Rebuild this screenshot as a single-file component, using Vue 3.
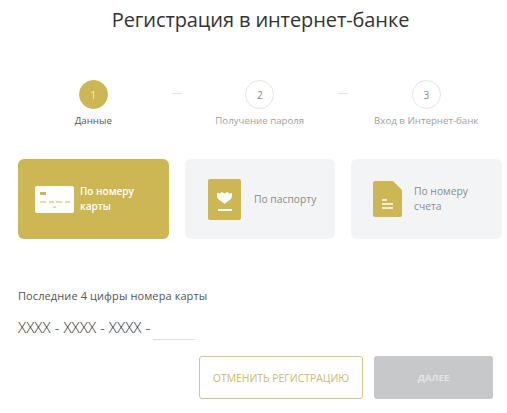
<script setup>
const steps = [
  { n: 1, label: 'Данные', active: true },
  { n: 2, label: 'Получение пароля' },
  { n: 3, label: 'Вход в Интернет-банк' }
]
</script>

<template>
  <div class="page">
    <h1 class="title">Регистрация в интернет-банке</h1>

    <div class="steps">
      <template v-for="(s, i) in steps" :key="s.n">
        <div class="step" :class="{ active: s.active }">
          <div class="circle">{{ s.n }}</div>
          <div class="label">{{ s.label }}</div>
        </div>
        <div v-if="i < 2" class="dash"></div>
      </template>
    </div>

    <div class="cards">
      <div class="card selected">
        <svg class="ic-card" width="39" height="27" viewBox="0 0 39 27">
          <rect width="39" height="27" rx="2" fill="#fff" />
          <rect x="5" y="6" width="6" height="3" fill="#cdb654" />
          <path d="M5 16h6M14 16h5M21 16h6M30 16h5M18 21h3" stroke="#cdb654" stroke-width="1" />
        </svg>
        <span class="card-text wide">По номеру карты</span>
      </div>
      <div class="card middle">
        <svg class="ic-pass" width="33" height="41" viewBox="0 0 33 41">
          <rect width="33" height="41" rx="2" fill="#cdb654" />
          <path d="M9 14l3 .5 1.500-1.500 3 1.500 3-1.500 1.500 1.500 3-.5v3c0 3-3.500 5-4.500 5.500l-3 2.500-3-2.500c-1-.5-4.500-2.500-4.500-5.500z" fill="#fff" />
          <rect x="10" y="30" width="14" height="2" fill="#fff" />
        </svg>
        <span class="card-text">По паспорту</span>
      </div>
      <div class="card third">
        <svg class="ic-doc" width="29" height="36" viewBox="0 0 29 36">
          <path d="M2 0h18l9 9v25a2 2 0 0 1-2 2H2a2 2 0 0 1-2-2V2a2 2 0 0 1 2-2z" fill="#cdb654" />
          <path d="M9 19h5M9 23h11M9 27h11" stroke="#fff" stroke-width="1.500" />
        </svg>
        <span class="card-text wide">По номеру счета</span>
      </div>
    </div>

    <div class="field-label">Последние 4 цифры номера карты</div>
    <div class="field">
      <span class="mask">XXXX - XXXX - XXXX -</span>
      <span class="input"></span>
    </div>

    <div class="actions">
      <button class="btn outline">ОТМЕНИТЬ РЕГИСТРАЦИЮ</button>
      <button class="btn disabled">ДАЛЕЕ</button>
    </div>
  </div>
</template>

<style>
html, body { margin: 0; background: #fff; }
</style>

<style scoped>
.page {
  width: 507px;
  height: 413px;
  overflow: hidden;
  box-sizing: border-box;
  padding: 6px 14px 0 18px;
  font-family: "Open Sans", "Noto Sans", sans-serif;
  color: #333;
}
.title {
  margin: 0 -14px 0 -18px;
  padding-left: 14px;
  font-size: 20px;
  line-height: 27px;
  font-weight: 500;
  letter-spacing: -0.1px;
  text-align: center;
  color: #333;
}
.steps {
  display: flex;
  align-items: flex-start;
  margin-top: 47px;
  margin-left: -3px;
}
.step {
  display: flex;
  flex-direction: column;
  align-items: center;
  width: 156.500px;
  flex: none;
}
.circle {
  width: 27px;
  height: 27px;
  border: 1px solid #e3e3e3;
  border-radius: 50%;
  display: flex;
  align-items: center;
  justify-content: center;
  font-size: 10px;
  color: #888;
}
.active .circle {
  background: #cdb654;
  border-color: #cdb654;
  color: #f3ecc9;
}
.label {
  margin-top: 5px;
  font-size: 9.700px;
  line-height: 14px;
  color: #a0a0a0;
  white-space: nowrap;
}
.active .label { color: #555; }
.dash {
  width: 10px;
  height: 1px;
  background: #e3e3e3;
  margin-top: 13px;
  flex: none;
}
.cards {
  display: flex;
  gap: 16px;
  margin-top: 31px;
}
.card {
  width: 151px;
  height: 80px;
  flex: none;
  box-sizing: border-box;
  border-radius: 6px;
  background: #f3f4f6;
  display: flex;
  align-items: center;
  padding-left: 23px;
  color: #8b8b8b;
}
.card.middle { width: 150px; }
.card.third { padding-left: 22px; }
.card.selected {
  background: #cdb654;
  color: #fff;
  padding-left: 17px;
}
.card svg { flex: none; }
.card-text {
  font-size: 10.300px;
  line-height: 15px;
  margin-left: 13px;
  font-weight: 400;
}
.selected .card-text { margin-left: 6px; font-weight: 600; font-size: 10px; }
.third .card-text { margin-left: 12px; }
.wide { width: 66px; }
.field-label {
  margin-top: 50px;
  font-size: 11px;
  line-height: 14px;
  letter-spacing: 0.1px;
  color: #555;
}
.field {
  display: flex;
  align-items: flex-end;
  margin-top: 13px;
  height: 24px;
}
.mask {
  font-size: 15.200px;
  line-height: 20px;
  font-weight: 300;
  color: #333;
  white-space: nowrap;
  padding-bottom: 3px;
}
.input {
  width: 42px;
  height: 1px;
  background: #ddd;
  margin-left: 3px;
}
.actions {
  display: flex;
  justify-content: flex-end;
  gap: 11px;
  margin-top: 16px;
}
.btn {
  height: 43px;
  border-radius: 3px;
  font-family: inherit;
  font-size: 10.400px;
  box-sizing: border-box;
  padding: 0;
}
.outline {
  width: 164px;
  background: #fff;
  border: 1px solid #d6c682;
  color: #cdb96b;
}
.disabled {
  width: 119px;
  background: #c7c8ca;
  border: none;
  color: #e4e4e5;
  font-weight: 700;
  font-size: 9.500px;
}
</style>
